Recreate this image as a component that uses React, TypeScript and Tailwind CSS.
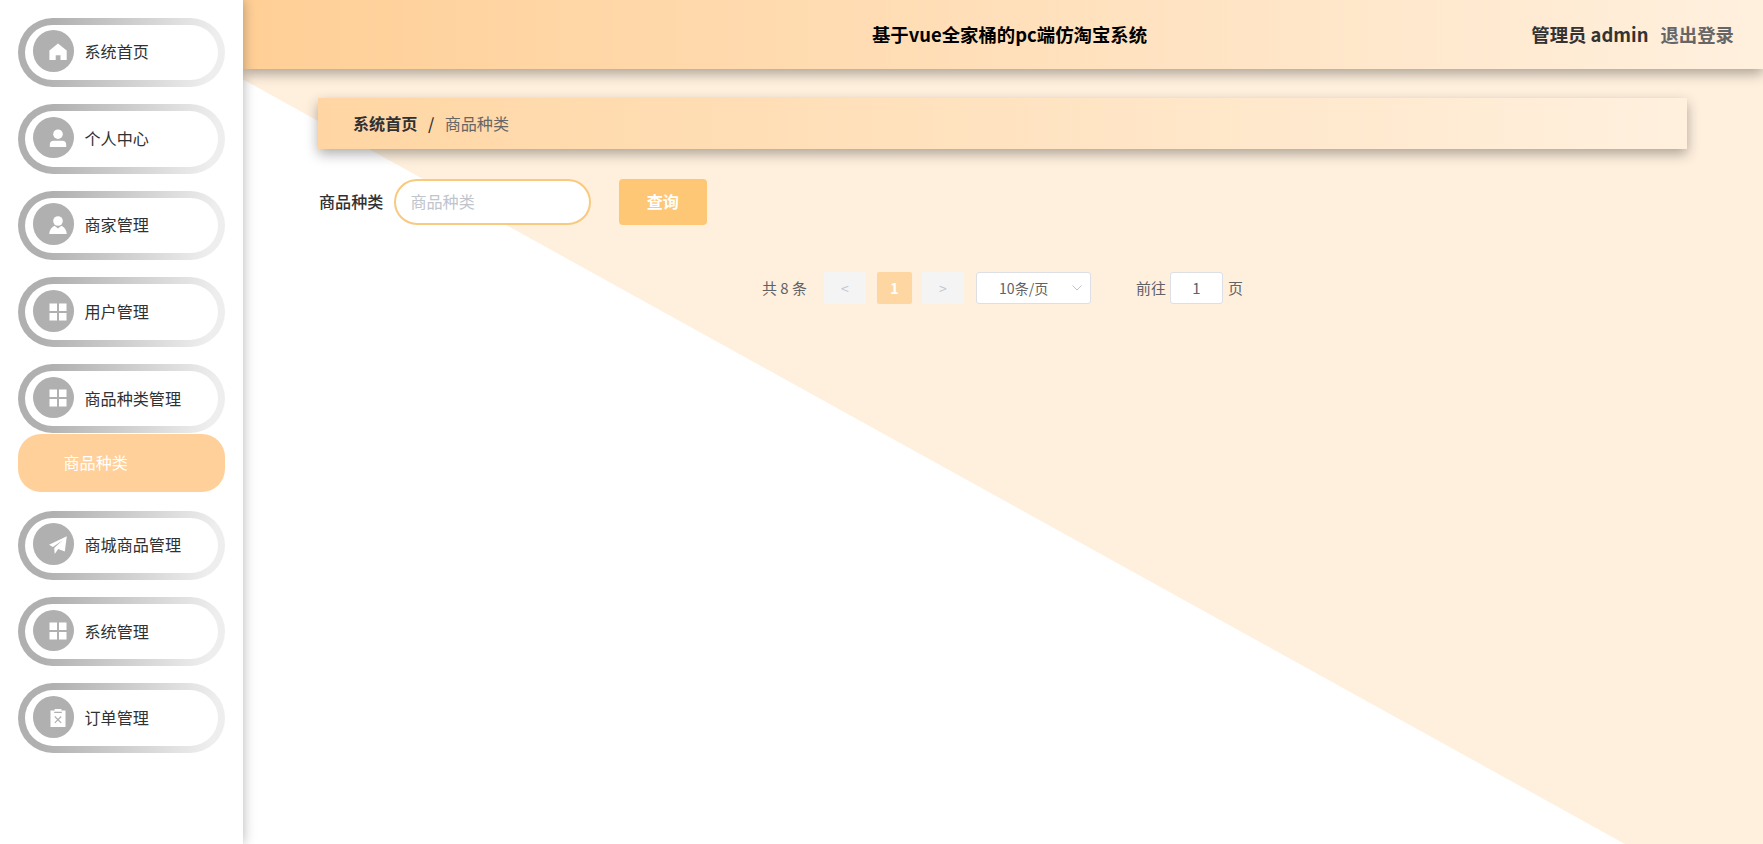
import React from "react";

type IconName = "home" | "user" | "custom" | "menu" | "send" | "release";

function Icon({ name }: { name: IconName }) {
  return (
    <svg viewBox="0 0 18 18" className="h-[18px] w-[18px] shrink-0 fill-white">
      {name === "home" && (
        <path d="M9 .6 17.700 7.400V16.400a.6.6 0 0 1-.6.6H11.500V12.200H6.700V17H1a.6.6 0 0 1-.6-.6V7.400Z" />
      )}
      {name === "user" && (
        <>
          <circle cx="9" cy="5.2" r="4.800" />
          <path d="M.8 18v-2.2a4 4 0 0 1 4-4h8.4a4 4 0 0 1 4 4V18Z" />
        </>
      )}
      {name === "custom" && (
        <>
          <circle cx="9" cy="5" r="4.8" />
          <path d="M.2 18C.6 13.800 2.600 11 5.600 9.800L9 12.600l3.400-2.800C15.400 11 17.400 13.800 17.800 18Z" />
        </>
      )}
      {name === "menu" && (
        <path d="M.5.500h7.500v7.500H.5ZM10 .5h7.500v7.500H10ZM.5 10h7.500v7.500H.5ZM10 10h7.500v7.500H10Z" />
      )}
      {name === "send" && (
        <path d="M0 8.800 17.800.2 15.800 15.400 9.200 12.900 5.700 18 5.200 11.900 13.600 4.300 3.900 11Z" />
      )}
      {name === "release" && (
        <>
          <path d="M1.500 1.600H5.600V0h6.800v1.600h4.100V18H1.500Z" />
          <path d="M5.200 3.300h7.600M5.800 7.500l6.400 6.400M12.200 7.500l-6.400 6.400" className="stroke-[#b0b0b0] stroke-[1.2]" />
        </>
      )}
    </svg>
  );
}

function MenuItem({ icon, label }: { icon: IconName; label: string }) {
  return (
    <div className="h-[69.4px] w-[207.5px] rounded-full bg-[linear-gradient(100deg,#b0b0b0_16%,#eeeeee_92%)] p-[7px]">
      <div className="flex h-full items-center rounded-full bg-white pl-2">
        <span className="mb-[2.500px] flex h-[41.5px] w-[41.5px] items-center justify-center rounded-full bg-[#b0b0b0] pt-[1.5px] pl-[9px]">
          <Icon name={icon} />
        </span>
        <span className="ml-[10.5px] pb-[2px] text-[#303133]">{label}</span>
      </div>
    </div>
  );
}

const upper: { icon: IconName; label: string }[] = [
  { icon: "home", label: "系统首页" },
  { icon: "user", label: "个人中心" },
  { icon: "custom", label: "商家管理" },
  { icon: "menu", label: "用户管理" },
  { icon: "menu", label: "商品种类管理" },
];

const lower: { icon: IconName; label: string }[] = [
  { icon: "send", label: "商城商品管理" },
  { icon: "menu", label: "系统管理" },
  { icon: "release", label: "订单管理" },
];

export default function App() {
  return (
    <div className="flex h-[844px] w-full overflow-hidden bg-white font-['Noto_Sans_CJK_SC','Noto_Sans',sans-serif] text-[16.1px] leading-6">
      <aside className="relative z-20 w-[243px] shrink-0 bg-white pt-[17.5px] pl-[17.5px] shadow-[0_0_12px_rgba(0,0,0,0.3)]">
        <div className="flex flex-col gap-[17.25px]">
          {upper.map((m) => (
            <MenuItem key={m.label} {...m} />
          ))}
        </div>
        <div className="mt-[0.5px] mb-[18.700px] flex h-[58px] w-[207.5px] items-center rounded-[23px] bg-[#ffd099] pb-[2px] pl-[46px] text-white">
          商品种类
        </div>
        <div className="flex flex-col gap-[17px]">
          {lower.map((m) => (
            <MenuItem key={m.label} {...m} />
          ))}
        </div>
      </aside>

      <div className="flex min-w-0 flex-1 flex-col">
        <header className="relative z-10 grid h-[69px] shrink-0 grid-cols-[1fr_auto_1fr] items-center bg-[linear-gradient(90deg,#ffcf96,#fff0de)] pr-[29px] pb-px text-[18.4px] font-bold shadow-[0_5px_12px_rgba(0,0,0,0.32)]">
          <span />
          <h1 className="ml-[42px] text-black">基于vue全家桶的pc端仿淘宝系统</h1>
          <div className="flex justify-end gap-[12px] text-[#333]">
            <span>管理员 admin</span>
            <span className="text-[#666]">退出登录</span>
          </div>
        </header>

        <main className="flex-1 bg-[#fff0de] bg-[linear-gradient(to_top_right,#fff_50%,#fff0de_calc(50%+1px))] bg-[length:100%_841px] bg-[position:0_11px] bg-no-repeat pt-[29px] pr-[76px] pl-[75px]">
          <nav className="flex h-[51px] items-center bg-[linear-gradient(90deg,#ffd6a3,#fff0de)] pb-[2px] pl-[35px] shadow-[0_5px_12px_rgba(0,0,0,0.32)]">
            <span className="font-bold text-[#303133]">系统首页</span>
            <span className="mx-[10.5px] font-medium text-[#303133]">/</span>
            <span className="text-[#666]">商品种类</span>
          </nav>

          <form className="mt-[30px] flex items-center pl-px">
            <label className="pb-[2px] font-medium text-[#303133]">商品种类</label>
            <input
              placeholder="商品种类"
              className="ml-[10.5px] h-[46px] w-[197px] rounded-full border-2 border-[#f8c97f] bg-white px-[14.5px] pb-[2px] outline-none placeholder:text-[#c0c4cc]"
            />
            <button type="button" className="ml-[28px] h-[46px] w-[88px] rounded-[4px] bg-[#fec776] pb-[2px] font-bold text-white">
              查询
            </button>
          </form>

          <div className="mt-[47px] flex h-8 items-center pl-[444px] text-[14.95px] text-[#606266]">
            <span className="w-[62px]">共 8 条</span>
            <button className="mb-px h-8 w-[42px] bg-[#f4f4f5] text-sm text-[#c0c4cc]">&lt;</button>
            <button className="mb-px ml-[11px] h-8 w-[35px] rounded-[2px] bg-[#fed6a2] font-bold text-white">1</button>
            <button className="mb-px ml-[10px] h-8 w-[42px] bg-[#f4f4f5] text-sm text-[#c0c4cc]">&gt;</button>
            <div className="ml-[12px] flex h-8 w-[115px] items-center justify-between rounded-[3px] border border-[#dcdfe6] bg-white pr-[8px] pl-[22px]">
              <span className="text-[14.100px]">10条/页</span>
              <svg viewBox="0 0 10 6" className="h-[6px] w-[10px] fill-none stroke-[#c0c4cc]">
                <path d="m.5.5 4.500 4.500 4.500-4.500" />
              </svg>
            </div>
            <span className="ml-[45px]">前往</span>
            <span className="ml-[4px] flex h-8 w-[53px] items-center justify-center rounded-[3px] border border-[#dcdfe6] bg-white">1</span>
            <span className="ml-[5px]">页</span>
          </div>
        </main>
      </div>
    </div>
  );
}
